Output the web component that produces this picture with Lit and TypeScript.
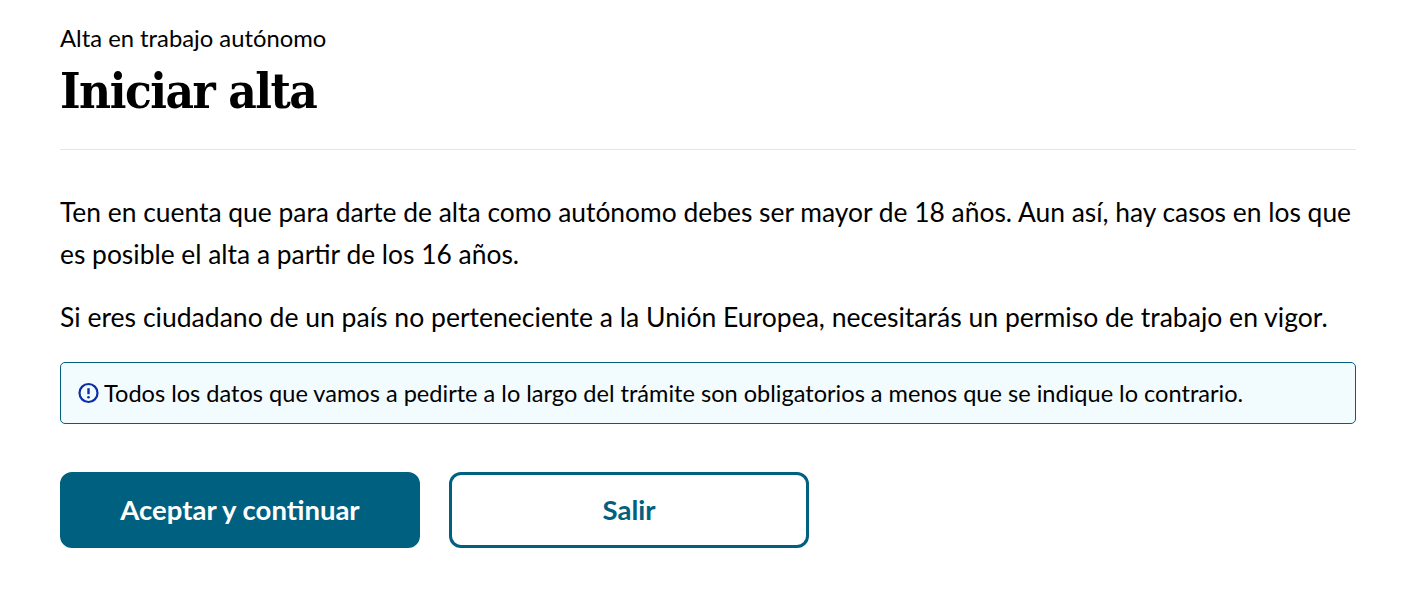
import { LitElement, html, css } from "lit";
import { customElement } from "lit/decorators.js";

@customElement("app-root")
export class AppRoot extends LitElement {
  static styles = css`
    :host {
      display: block;
      font-family: Lato, "Liberation Sans", sans-serif;
      color: #000;
      background: #fff;
      height: 606px;
      box-sizing: border-box;
      padding: 23px 46px 0 60px;
    }
    .eyebrow { font-size: 23.8px; line-height: 30px; }
    h1 {
      font-family: "DejaVu Serif", "Liberation Serif", serif;
      font-stretch: condensed;
      font-weight: 700;
      font-size: 49px;
      letter-spacing: -1.5px;
      line-height: 64px;
      margin: 6px 0 0;
      color: #000;
    }
    hr { border: 0; border-top: 1px solid #e6e6e6; margin: 26px 0 0; }
    p { line-height: 42px; margin: 0; }
    .first { margin-top: 41px; font-size: 26.4px; }
    .second { margin-top: 21px; font-size: 26.55px; }
    .note {
      display: flex;
      align-items: center;
      gap: 4px;
      margin-top: 24px;
      height: 62px;
      box-sizing: border-box;
      padding: 0 17px;
      border: 1px solid #006080;
      border-radius: 5px;
      background: #f2fbfd;
      font-size: 23.57px;
    }
    .note svg { flex: none; width: 22px; height: 22px; }
    .actions { display: flex; gap: 29px; margin-top: 48px; }
    button {
      width: 360px;
      height: 76px;
      box-sizing: border-box;
      border-radius: 12px;
      border: 3px solid #006080;
      padding: 0 0 2px;
      font: 700 27.5px Lato, "Liberation Sans", sans-serif;
      cursor: pointer;
    }
    .primary { background: #006080; color: #fff; }
    .secondary { background: #fff; color: #006080; }
  `;

  render() {
    return html`
      <div class="eyebrow">Alta en trabajo autónomo</div>
      <h1>Iniciar alta</h1>
      <hr />
      <p class="first">Ten en cuenta que para darte de alta como autónomo debes ser mayor de 18 años. Aun así, hay casos en los que es posible el alta a partir de los 16 años.</p>
      <p class="second">Si eres ciudadano de un país no perteneciente a la Unión Europea, necesitarás un permiso de trabajo en vigor.</p>
      <div class="note">
        <svg viewBox="0 0 22 22" fill="none" aria-hidden="true">
          <circle cx="10.5" cy="11" r="9" stroke="#0b2fa8" stroke-width="2.2"></circle>
          <path d="M10.5 6.2v6" stroke="#0b2fa8" stroke-width="2.4"></path>
          <circle cx="10.5" cy="15.3" r="1.3" fill="#0b2fa8"></circle>
        </svg>
        <span>Todos los datos que vamos a pedirte a lo largo del trámite son obligatorios a menos que se indique lo contrario.</span>
      </div>
      <div class="actions">
        <button class="primary">Aceptar y continuar</button>
        <button class="secondary">Salir</button>
      </div>
    `;
  }
}
